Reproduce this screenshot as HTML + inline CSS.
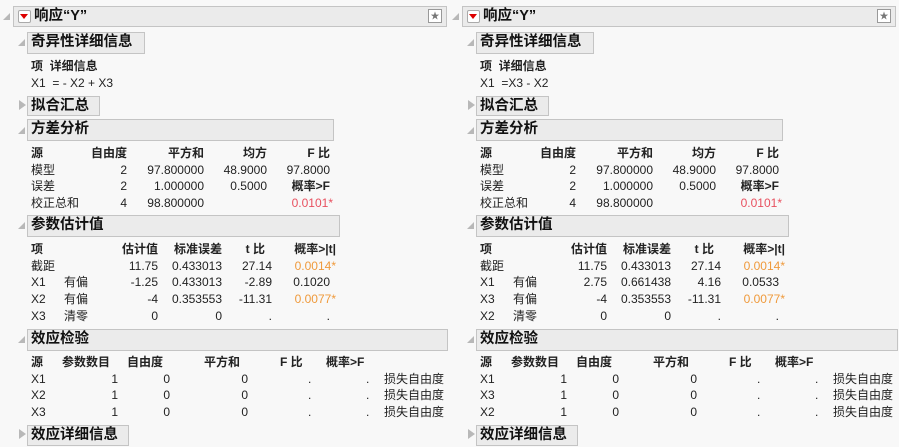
<!DOCTYPE html>
<html><head><meta charset="utf-8"><style>
body{margin:0;width:899px;height:447px;background:#f8f8f8;overflow:hidden;font-family:"Liberation Sans","Noto Sans CJK SC",sans-serif;font-size:12px;color:#222}
.p{position:absolute;top:0;width:450px;height:447px}
.p *{position:absolute;white-space:nowrap}
.h{background:#ebebeb;border:1px solid #c4c4c4;font-weight:bold;font-size:14.5px;line-height:19px;padding-left:3px;box-sizing:border-box;color:#111}
.tri{width:0;height:0;border-style:solid;border-width:0 0 7px 7px;border-color:transparent transparent #b8b8b8 transparent}
.tr{width:0;height:0;border-style:solid;border-width:5px 0 5px 7px;border-color:transparent transparent transparent #b8b8b8}
.b{font-weight:bold}
.red{color:#e8505f}.or{color:#ef9a3c}
.t{line-height:14px}
</style></head><body>

<div class="p" style="left:0">
<div class="tri" style="left:3px;top:13px"></div>
<div class="h" style="left:13px;top:6px;width:434px;height:21px;padding-left:20px">响应“Y”</div>
<div style="left:18px;top:10px;width:11px;height:11px;border:1px solid #aaa;background:#fff;border-radius:2px"></div>
<div style="left:20px;top:14px;border-style:solid;border-width:5px 4px 0 4px;border-color:#d00 transparent transparent transparent;width:0;height:0"></div>
<div style="left:428px;top:9px;width:12px;height:12px;border:1px solid #999;background:#fff;font-size:9px;line-height:12px;text-align:center;color:#777">★</div>

<div class="tri" style="left:18px;top:39px"></div>
<div class="h" style="left:27px;top:32px;width:118px;height:22px">奇异性详细信息</div>
<div class="b t" style="left:31px;top:59px">项&nbsp;&nbsp;详细信息</div>
<div class="t" style="left:31px;top:76px">X1&nbsp; = - X2 + X3</div>

<div class="tr" style="left:19px;top:100px"></div>
<div class="h" style="left:27px;top:96px;width:73px;height:20px">拟合汇总</div>

<div class="tri" style="left:18px;top:127px"></div>
<div class="h" style="left:27px;top:119px;width:307px;height:22px">方差分析</div>
<div class="b t" style="left:31px;top:146px">源</div>
<div class="b t" style="right:323px;top:146px">自由度</div>
<div class="b t" style="right:246px;top:146px">平方和</div>
<div class="b t" style="right:183px;top:146px">均方</div>
<div class="b t" style="right:120px;top:146px">F 比</div>
<div class="t" style="left:31px;top:163px">模型</div><div class="t" style="right:323px;top:163px">2</div><div class="t" style="right:246px;top:163px">97.800000</div><div class="t" style="right:183px;top:163px">48.9000</div><div class="t" style="right:120px;top:163px">97.8000</div>
<div class="t" style="left:31px;top:179px">误差</div><div class="t" style="right:323px;top:179px">2</div><div class="t" style="right:246px;top:179px">1.000000</div><div class="t" style="right:183px;top:179px">0.5000</div><div class="b t" style="right:120px;top:179px">概率&gt;F</div>
<div class="t" style="left:31px;top:196px">校正总和</div><div class="t" style="right:323px;top:196px">4</div><div class="t" style="right:246px;top:196px">98.800000</div><div class="t red" style="right:117px;top:196px">0.0101*</div>

<div class="tri" style="left:18px;top:222px"></div>
<div class="h" style="left:27px;top:215px;width:313px;height:22px">参数估计值</div>
<div class="b t" style="left:31px;top:242px">项</div>
<div class="b t" style="right:292px;top:242px">估计值</div>
<div class="b t" style="right:228px;top:242px">标准误差</div>
<div class="b t" style="right:185px;top:242px">t 比</div>
<div class="b t" style="right:114px;top:242px">概率&gt;|t|</div>
<div class="t" style="left:31px;top:259px">截距</div><div class="t" style="right:292px;top:259px">11.75</div><div class="t" style="right:228px;top:259px">0.433013</div><div class="t" style="right:178px;top:259px">27.14</div><div class="t or" style="right:114px;top:259px">0.0014*</div>
<div class="t" style="left:31px;top:275px">X1</div><div class="t" style="left:64px;top:275px">有偏</div><div class="t" style="right:292px;top:275px">-1.25</div><div class="t" style="right:228px;top:275px">0.433013</div><div class="t" style="right:178px;top:275px">-2.89</div><div class="t" style="right:120px;top:275px">0.1020</div>
<div class="t" style="left:31px;top:292px">X2</div><div class="t" style="left:64px;top:292px">有偏</div><div class="t" style="right:292px;top:292px">-4</div><div class="t" style="right:228px;top:292px">0.353553</div><div class="t" style="right:178px;top:292px">-11.31</div><div class="t or" style="right:114px;top:292px">0.0077*</div>
<div class="t" style="left:31px;top:309px">X3</div><div class="t" style="left:64px;top:309px">清零</div><div class="t" style="right:292px;top:309px">0</div><div class="t" style="right:228px;top:309px">0</div><div class="t" style="right:178px;top:309px">.</div><div class="t" style="right:120px;top:309px">.</div>

<div class="tri" style="left:18px;top:336px"></div>
<div class="h" style="left:27px;top:329px;width:421px;height:22px">效应检验</div>
<div class="b t" style="left:31px;top:355px">源</div>
<div class="b t" style="left:62px;top:355px">参数数目</div>
<div class="b t" style="left:127px;top:355px">自由度</div>
<div class="b t" style="left:204px;top:355px">平方和</div>
<div class="b t" style="left:280px;top:355px">F 比</div>
<div class="b t" style="left:326px;top:355px">概率&gt;F</div>
<div class="t" style="left:31px;top:372px">X1</div><div class="t" style="right:332px;top:372px">1</div><div class="t" style="right:280px;top:372px">0</div><div class="t" style="right:202px;top:372px">0</div><div class="t" style="left:308px;top:372px">.</div><div class="t" style="left:366px;top:372px">.</div><div class="t" style="left:384px;top:372px">损失自由度</div>
<div class="t" style="left:31px;top:388px">X2</div><div class="t" style="right:332px;top:388px">1</div><div class="t" style="right:280px;top:388px">0</div><div class="t" style="right:202px;top:388px">0</div><div class="t" style="left:308px;top:388px">.</div><div class="t" style="left:366px;top:388px">.</div><div class="t" style="left:384px;top:388px">损失自由度</div>
<div class="t" style="left:31px;top:405px">X3</div><div class="t" style="right:332px;top:405px">1</div><div class="t" style="right:280px;top:405px">0</div><div class="t" style="right:202px;top:405px">0</div><div class="t" style="left:308px;top:405px">.</div><div class="t" style="left:366px;top:405px">.</div><div class="t" style="left:384px;top:405px">损失自由度</div>

<div class="tr" style="left:19px;top:429px"></div>
<div class="h" style="left:27px;top:425px;width:102px;height:21px">效应详细信息</div>
</div>

<div class="p" style="left:449px">
<div class="tri" style="left:3px;top:13px"></div>
<div class="h" style="left:13px;top:6px;width:434px;height:21px;padding-left:20px">响应“Y”</div>
<div style="left:18px;top:10px;width:11px;height:11px;border:1px solid #aaa;background:#fff;border-radius:2px"></div>
<div style="left:20px;top:14px;border-style:solid;border-width:5px 4px 0 4px;border-color:#d00 transparent transparent transparent;width:0;height:0"></div>
<div style="left:428px;top:9px;width:12px;height:12px;border:1px solid #999;background:#fff;font-size:9px;line-height:12px;text-align:center;color:#777">★</div>

<div class="tri" style="left:18px;top:39px"></div>
<div class="h" style="left:27px;top:32px;width:118px;height:22px">奇异性详细信息</div>
<div class="b t" style="left:31px;top:59px">项&nbsp;&nbsp;详细信息</div>
<div class="t" style="left:31px;top:76px">X1&nbsp; =X3 - X2</div>

<div class="tr" style="left:19px;top:100px"></div>
<div class="h" style="left:27px;top:96px;width:73px;height:20px">拟合汇总</div>

<div class="tri" style="left:18px;top:127px"></div>
<div class="h" style="left:27px;top:119px;width:307px;height:22px">方差分析</div>
<div class="b t" style="left:31px;top:146px">源</div>
<div class="b t" style="right:323px;top:146px">自由度</div>
<div class="b t" style="right:246px;top:146px">平方和</div>
<div class="b t" style="right:183px;top:146px">均方</div>
<div class="b t" style="right:120px;top:146px">F 比</div>
<div class="t" style="left:31px;top:163px">模型</div><div class="t" style="right:323px;top:163px">2</div><div class="t" style="right:246px;top:163px">97.800000</div><div class="t" style="right:183px;top:163px">48.9000</div><div class="t" style="right:120px;top:163px">97.8000</div>
<div class="t" style="left:31px;top:179px">误差</div><div class="t" style="right:323px;top:179px">2</div><div class="t" style="right:246px;top:179px">1.000000</div><div class="t" style="right:183px;top:179px">0.5000</div><div class="b t" style="right:120px;top:179px">概率&gt;F</div>
<div class="t" style="left:31px;top:196px">校正总和</div><div class="t" style="right:323px;top:196px">4</div><div class="t" style="right:246px;top:196px">98.800000</div><div class="t red" style="right:117px;top:196px">0.0101*</div>

<div class="tri" style="left:18px;top:222px"></div>
<div class="h" style="left:27px;top:215px;width:313px;height:22px">参数估计值</div>
<div class="b t" style="left:31px;top:242px">项</div>
<div class="b t" style="right:292px;top:242px">估计值</div>
<div class="b t" style="right:228px;top:242px">标准误差</div>
<div class="b t" style="right:185px;top:242px">t 比</div>
<div class="b t" style="right:114px;top:242px">概率&gt;|t|</div>
<div class="t" style="left:31px;top:259px">截距</div><div class="t" style="right:292px;top:259px">11.75</div><div class="t" style="right:228px;top:259px">0.433013</div><div class="t" style="right:178px;top:259px">27.14</div><div class="t or" style="right:114px;top:259px">0.0014*</div>
<div class="t" style="left:31px;top:275px">X1</div><div class="t" style="left:64px;top:275px">有偏</div><div class="t" style="right:292px;top:275px">2.75</div><div class="t" style="right:228px;top:275px">0.661438</div><div class="t" style="right:178px;top:275px">4.16</div><div class="t" style="right:120px;top:275px">0.0533</div>
<div class="t" style="left:31px;top:292px">X3</div><div class="t" style="left:64px;top:292px">有偏</div><div class="t" style="right:292px;top:292px">-4</div><div class="t" style="right:228px;top:292px">0.353553</div><div class="t" style="right:178px;top:292px">-11.31</div><div class="t or" style="right:114px;top:292px">0.0077*</div>
<div class="t" style="left:31px;top:309px">X2</div><div class="t" style="left:64px;top:309px">清零</div><div class="t" style="right:292px;top:309px">0</div><div class="t" style="right:228px;top:309px">0</div><div class="t" style="right:178px;top:309px">.</div><div class="t" style="right:120px;top:309px">.</div>

<div class="tri" style="left:18px;top:336px"></div>
<div class="h" style="left:27px;top:329px;width:422px;height:22px">效应检验</div>
<div class="b t" style="left:31px;top:355px">源</div>
<div class="b t" style="left:62px;top:355px">参数数目</div>
<div class="b t" style="left:127px;top:355px">自由度</div>
<div class="b t" style="left:204px;top:355px">平方和</div>
<div class="b t" style="left:280px;top:355px">F 比</div>
<div class="b t" style="left:326px;top:355px">概率&gt;F</div>
<div class="t" style="left:31px;top:372px">X1</div><div class="t" style="right:332px;top:372px">1</div><div class="t" style="right:280px;top:372px">0</div><div class="t" style="right:202px;top:372px">0</div><div class="t" style="left:308px;top:372px">.</div><div class="t" style="left:366px;top:372px">.</div><div class="t" style="left:384px;top:372px">损失自由度</div>
<div class="t" style="left:31px;top:388px">X3</div><div class="t" style="right:332px;top:388px">1</div><div class="t" style="right:280px;top:388px">0</div><div class="t" style="right:202px;top:388px">0</div><div class="t" style="left:308px;top:388px">.</div><div class="t" style="left:366px;top:388px">.</div><div class="t" style="left:384px;top:388px">损失自由度</div>
<div class="t" style="left:31px;top:405px">X2</div><div class="t" style="right:332px;top:405px">1</div><div class="t" style="right:280px;top:405px">0</div><div class="t" style="right:202px;top:405px">0</div><div class="t" style="left:308px;top:405px">.</div><div class="t" style="left:366px;top:405px">.</div><div class="t" style="left:384px;top:405px">损失自由度</div>

<div class="tr" style="left:19px;top:429px"></div>
<div class="h" style="left:27px;top:425px;width:102px;height:21px">效应详细信息</div>
</div>
</body></html>
